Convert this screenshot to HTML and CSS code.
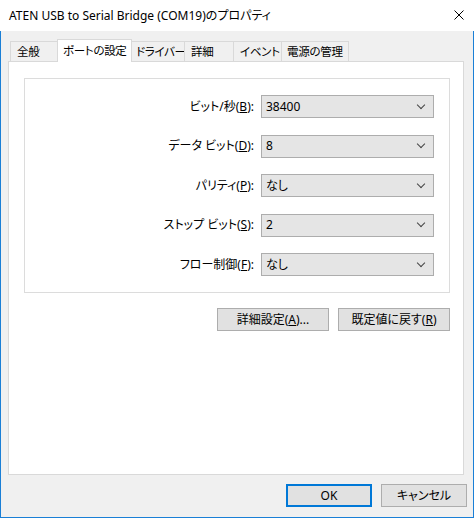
FILE: index.html
```html
<!DOCTYPE html>
<html lang="ja">
<head>
    <meta charset="UTF-8">
    <title>ATEN USB to Serial Bridge (COM19)のプロパティ</title>
    <link rel="stylesheet" href="styles.css">
</head>
<body>

    <div class="window">
        <div class="titlebar">
            <span class="title">ATEN USB to Serial Bridge (COM19)のプロパティ</span>
            <svg class="close" width="10" height="10" viewBox="0 0 10 10">
                <path d="M0.5 0.5 L9.5 9.5 M9.5 0.5 L0.5 9.5" stroke="#000" stroke-width="1" fill="none"/>
            </svg>
        </div>

        <div class="dialog">
            <div class="tabs">
                <div class="tab w-general">全般</div>
                <div class="tab active w-port">ポートの設定</div>
                <div class="tab w-driver">ドライバー</div>
                <div class="tab w-detail">詳細</div>
                <div class="tab w-event">イベント</div>
                <div class="tab w-power">電源の管理</div>
            </div>

            <div class="panel">
                <div class="group">
                    <div class="row">
                        <label>ビット/秒(<u>B</u>):</label>
                        <div class="combo"><span>38400</span><i class="chev"></i></div>
                    </div>
                    <div class="row">
                        <label>データ ビット(<u>D</u>):</label>
                        <div class="combo"><span>8</span><i class="chev"></i></div>
                    </div>
                    <div class="row">
                        <label>パリティ(<u>P</u>):</label>
                        <div class="combo"><span>なし</span><i class="chev"></i></div>
                    </div>
                    <div class="row">
                        <label>ストップ ビット(<u>S</u>):</label>
                        <div class="combo"><span>2</span><i class="chev"></i></div>
                    </div>
                    <div class="row">
                        <label>フロー制御(<u>F</u>):</label>
                        <div class="combo"><span>なし</span><i class="chev"></i></div>
                    </div>
                </div>

                <div class="panel-actions">
                    <button class="btn wide">詳細設定(<u>A</u>)...</button>
                    <button class="btn wide">既定値に戻す(<u>R</u>)</button>
                </div>
            </div>

            <div class="footer">
                <button class="btn ok">OK</button>
                <button class="btn">キャンセル</button>
            </div>
        </div>
    </div>

</body>
</html>
```

FILE: styles.css
```css
* {
    margin: 0;
    padding: 0;
    box-sizing: border-box;
}

body {
    width: 474px;
    height: 518px;
    font-family: "Noto Sans", "Noto Sans CJK JP", sans-serif;
    font-size: 12px;
    line-height: 16px;
    font-feature-settings: "palt";
    color: #000;
    background: #fff;
}

.window {
    width: 474px;
    height: 518px;
    display: flex;
    flex-direction: column;
}

.titlebar {
    height: 31px;
    background: #fff;
    display: flex;
    justify-content: space-between;
    align-items: center;
    padding: 0 10px 0 9px;
}

.title {
    font-size: 12px;
}

.close {
    display: block;
    margin-top: -1px;
}

.dialog {
    flex: 1;
    background: #f0f0f0;
    border: 1px solid #1a7fd6;
    border-top: none;
    padding: 8px 0 0 7px;
}

/* tabs */
.tabs {
    display: flex;
    align-items: flex-end;
    height: 22px;
    padding-left: 2px;
    position: relative;
    z-index: 1;
}

.tab {
    height: 20px;
    border: 1px solid #d9d9d9;
    border-bottom: none;
    background: #f0f0f0;
    padding: 2px 0 0 5px;
    margin-left: -1px;
    font-size: 11.5px;
    letter-spacing: -0.3px;
    white-space: nowrap;
    overflow: hidden;
}

.tab:first-child {
    margin-left: 0;
}

.tab.active {
    height: 23px;
    margin-bottom: -1px;
    background: #fff;
    padding-top: 3px;
    position: relative;
}

.w-general { width: 48px; padding-left: 6px; }
.w-port { width: 75px; }
.w-driver { width: 54px; padding-left: 4px; }
.w-detail { width: 50px; padding-left: 6px; }
.w-event { width: 49px; padding-left: 6px; }
.w-power { width: 68px; }

/* panel */
.panel {
    width: 456px;
    height: 414px;
    background: #fff;
    border: 1px solid #d9d9d9;
    padding: 16px 0 0 15px;
}

.group {
    width: 426px;
    height: 215px;
    border: 1px solid #dcdcdc;
    padding: 16px 15px 0 0;
    display: flex;
    flex-direction: column;
    gap: 16.5px;
}

.row {
    display: flex;
    justify-content: flex-end;
    align-items: center;
    gap: 7px;
}

.row label {
    white-space: nowrap;
}

.combo {
    width: 173px;
    height: 23px;
    background: #e5e5e5;
    border: 1px solid #adadad;
    display: flex;
    align-items: center;
    justify-content: space-between;
    padding: 0 9px 0 4px;
}

.chev {
    display: block;
    width: 6px;
    height: 6px;
    border-right: 1px solid #444;
    border-bottom: 1px solid #444;
    transform: rotate(45deg);
    margin-top: -4px;
}

.panel-actions {
    width: 426px;
    display: flex;
    justify-content: flex-end;
    gap: 9px;
    margin-top: 15px;
}

/* buttons */
.btn {
    height: 23px;
    width: 86px;
    background: #e1e1e1;
    border: 1px solid #adadad;
    font-family: inherit;
    font-size: 12px;
    font-feature-settings: "palt";
    color: #000;
    line-height: 16px;
}

.btn.wide {
    width: 112px;
}

.btn.ok {
    border: 2px solid #0078d7;
}

.footer {
    display: flex;
    justify-content: flex-end;
    gap: 9px;
    margin-top: 9px;
    padding-right: 6px;
}
```
